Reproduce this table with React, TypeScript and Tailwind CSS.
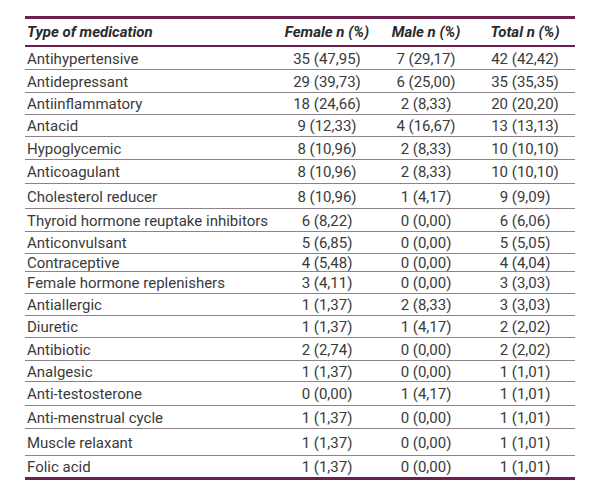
import React from 'react';

type Row = { name: string; female: string; male: string; total: string; h: string };

const rows: Row[] = [
  { name: 'Antihypertensive', female: '35 (47,95)', male: '7 (29,17)', total: '42 (42,42)', h: 'h-[23px]' },
  { name: 'Antidepressant', female: '29 (39,73)', male: '6 (25,00)', total: '35 (35,35)', h: 'h-[23px]' },
  { name: 'Antiinflammatory', female: '18 (24,66)', male: '2 (8,33)', total: '20 (20,20)', h: 'h-[22px]' },
  { name: 'Antacid', female: '9 (12,33)', male: '4 (16,67)', total: '13 (13,13)', h: 'h-[22px]' },
  { name: 'Hypoglycemic', female: '8 (10,96)', male: '2 (8,33)', total: '10 (10,10)', h: 'h-[23px]' },
  { name: 'Anticoagulant', female: '8 (10,96)', male: '2 (8,33)', total: '10 (10,10)', h: 'h-[24px]' },
  { name: 'Cholesterol reducer', female: '8 (10,96)', male: '1 (4,17)', total: '9 (9,09)', h: 'h-[25px]' },
  { name: 'Thyroid hormone reuptake inhibitors', female: '6 (8,22)', male: '0 (0,00)', total: '6 (6,06)', h: 'h-[23px]' },
  { name: 'Anticonvulsant', female: '5 (6,85)', male: '0 (0,00)', total: '5 (5,05)', h: 'h-[22px]' },
  { name: 'Contraceptive', female: '4 (5,48)', male: '0 (0,00)', total: '4 (4,04)', h: 'h-[18px]' },
  { name: 'Female hormone replenishers', female: '3 (4,11)', male: '0 (0,00)', total: '3 (3,03)', h: 'h-[22px]' },
  { name: 'Antiallergic', female: '1 (1,37)', male: '2 (8,33)', total: '3 (3,03)', h: 'h-[22px]' },
  { name: 'Diuretic', female: '1 (1,37)', male: '1 (4,17)', total: '2 (2,02)', h: 'h-[22px]' },
  { name: 'Antibiotic', female: '2 (2,74)', male: '0 (0,00)', total: '2 (2,02)', h: 'h-[23px]' },
  { name: 'Analgesic', female: '1 (1,37)', male: '0 (0,00)', total: '1 (1,01)', h: 'h-[21px]' },
  { name: 'Anti-testosterone', female: '0 (0,00)', male: '1 (4,17)', total: '1 (1,01)', h: 'h-[24px]' },
  { name: 'Anti-menstrual cycle', female: '1 (1,37)', male: '0 (0,00)', total: '1 (1,01)', h: 'h-[23px]' },
  { name: 'Muscle relaxant', female: '1 (1,37)', male: '0 (0,00)', total: '1 (1,01)', h: 'h-[27px]' },
  { name: 'Folic acid', female: '1 (1,37)', male: '0 (0,00)', total: '1 (1,01)', h: 'h-[21px]' },
];

const cols = 'grid grid-cols-[252px_100px_98px_100px]';

export default function App() {
  return (
    <div className="w-[606px] h-[495px] bg-white pt-[16px] pl-[25px] font-['Roboto','Liberation_Sans',sans-serif] text-[#3a3a3a]">
      <div className="w-[550px] border-t-[3px] border-b-[3px] border-[#6b1f4d]">
        <div className={`${cols} h-[28px] items-center border-b-2 border-[#6b1f4d] text-[15px] font-bold italic text-[#2b2b2b]`}>
          <div className="pl-[2px]">Type of medication</div>
          <div className="text-center">Female n (%)</div>
          <div className="text-center">Male n (%)</div>
          <div className="text-center">Total n (%)</div>
        </div>
        {rows.map((r, i) => (
          <div
            key={r.name}
            className={`${cols} ${r.h} items-center text-[15px] leading-none ${i < rows.length - 1 ? 'border-b border-[#8e828a]' : ''}`}
          >
            <div className="pl-[2px] pt-[2px]">{r.name}</div>
            <div className="text-center pt-[2px]">{r.female}</div>
            <div className="text-center pt-[2px]">{r.male}</div>
            <div className="text-center pt-[2px]">{r.total}</div>
          </div>
        ))}
      </div>
    </div>
  );
}
